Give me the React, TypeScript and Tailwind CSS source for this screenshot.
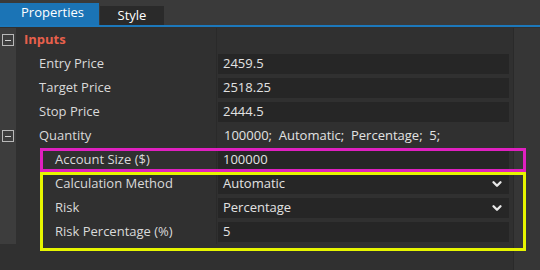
import React from 'react';
import { ChevronDown } from 'lucide-react';

interface Row {
  label: string;
  value: string;
  indent?: boolean;
  boxed?: boolean;
  dropdown?: boolean;
  toggle?: boolean;
}

const rows: Row[] = [
  { label: 'Entry Price', value: '2459.5', boxed: true },
  { label: 'Target Price', value: '2518.25', boxed: true },
  { label: 'Stop Price', value: '2444.5', boxed: true },
  { label: 'Quantity', value: '100000;  Automatic;  Percentage;  5;', toggle: true },
  { label: 'Account Size ($)', value: '100000', indent: true, boxed: true },
  { label: 'Calculation Method', value: 'Automatic', indent: true, boxed: true, dropdown: true },
  { label: 'Risk', value: 'Percentage', indent: true, boxed: true, dropdown: true },
  { label: 'Risk Percentage (%)', value: '5', indent: true, boxed: true },
];

const MinusBox = () => (
  <div className="w-[12px] h-[12px] border border-[#b8b8b8] flex items-center justify-center">
    <div className="w-[6px] h-[1px] bg-[#d0d0d0]" />
  </div>
);

const App: React.FC = () => {
  return (
    <div
      className="w-[540px] h-[270px] bg-[#303030] overflow-hidden text-[13px] text-[#dadada]"
      style={{ fontFamily: '"Open Sans", "Liberation Sans", sans-serif' }}
    >
      {/* Tabs */}
      <div className="h-[25px] bg-[#3a3a3a] flex items-end">
        <div className="w-[99px] h-[22px] bg-[#1b74b6] text-white text-[13px] flex items-center pl-[21px] pb-[2px]">
          Properties
        </div>
        <div className="w-[64px] h-[19px] ml-[1px] bg-[#2a2a2a] text-white text-[13px] flex items-center justify-center">
          Style
        </div>
      </div>
      <div className="h-[2px] bg-[#1c78bb]" />

      <div className="flex mt-[1px]">
        <div className="relative w-[513px]">
          {/* Inputs header */}
          <div className="flex h-[24px]">
            <div className="w-[16px] bg-[#3d3d3d] flex items-center justify-center">
              <MinusBox />
            </div>
            <div className="w-[200px] flex items-center pl-[8px] font-bold text-[13px] text-[#e8604c]">
              Inputs
            </div>
            <div className="w-[1px] bg-[#2a2a2a]" />
            <div className="flex-1" />
          </div>

          {rows.map((r) => (
            <div key={r.label} className="flex h-[24px]">
              <div className="w-[16px] bg-[#3d3d3d] flex items-center justify-center">
                {r.toggle && <MinusBox />}
              </div>
              <div className={`w-[200px] flex items-center ${r.indent ? 'pl-[39px]' : 'pl-[23px]'}`}>
                {r.label}
              </div>
              <div className="w-[1px] bg-[#2a2a2a]" />
              <div className="flex-1 flex items-center pl-[1px] pr-[4px]">
                {r.boxed ? (
                  <div className="w-full h-[20px] bg-[#262626] flex items-center pl-[5px] pr-[5px] text-[#e2e2e2]">
                    <span className="flex-1">{r.value}</span>
                    {r.dropdown && <ChevronDown size={14} strokeWidth={4} className="text-[#e8e8e8]" />}
                  </div>
                ) : (
                  <div className="pl-[6px] text-[#e2e2e2] whitespace-pre">{r.value}</div>
                )}
              </div>
            </div>
          ))}

          {/* highlight outlines */}
          <div className="absolute left-[40px] top-[120px] w-[486px] h-[24px] border-[3px] border-[#e020c0]" />
          <div className="absolute left-[40px] top-[144px] w-[486px] h-[79px] border-[3px] border-[#e6f500]" />
        </div>
        <div className="w-[1px] h-[243px] bg-[#2a2a2a]" />
        <div className="flex-1 bg-[#363636] h-[243px]" />
      </div>
    </div>
  );
};

export default App;
